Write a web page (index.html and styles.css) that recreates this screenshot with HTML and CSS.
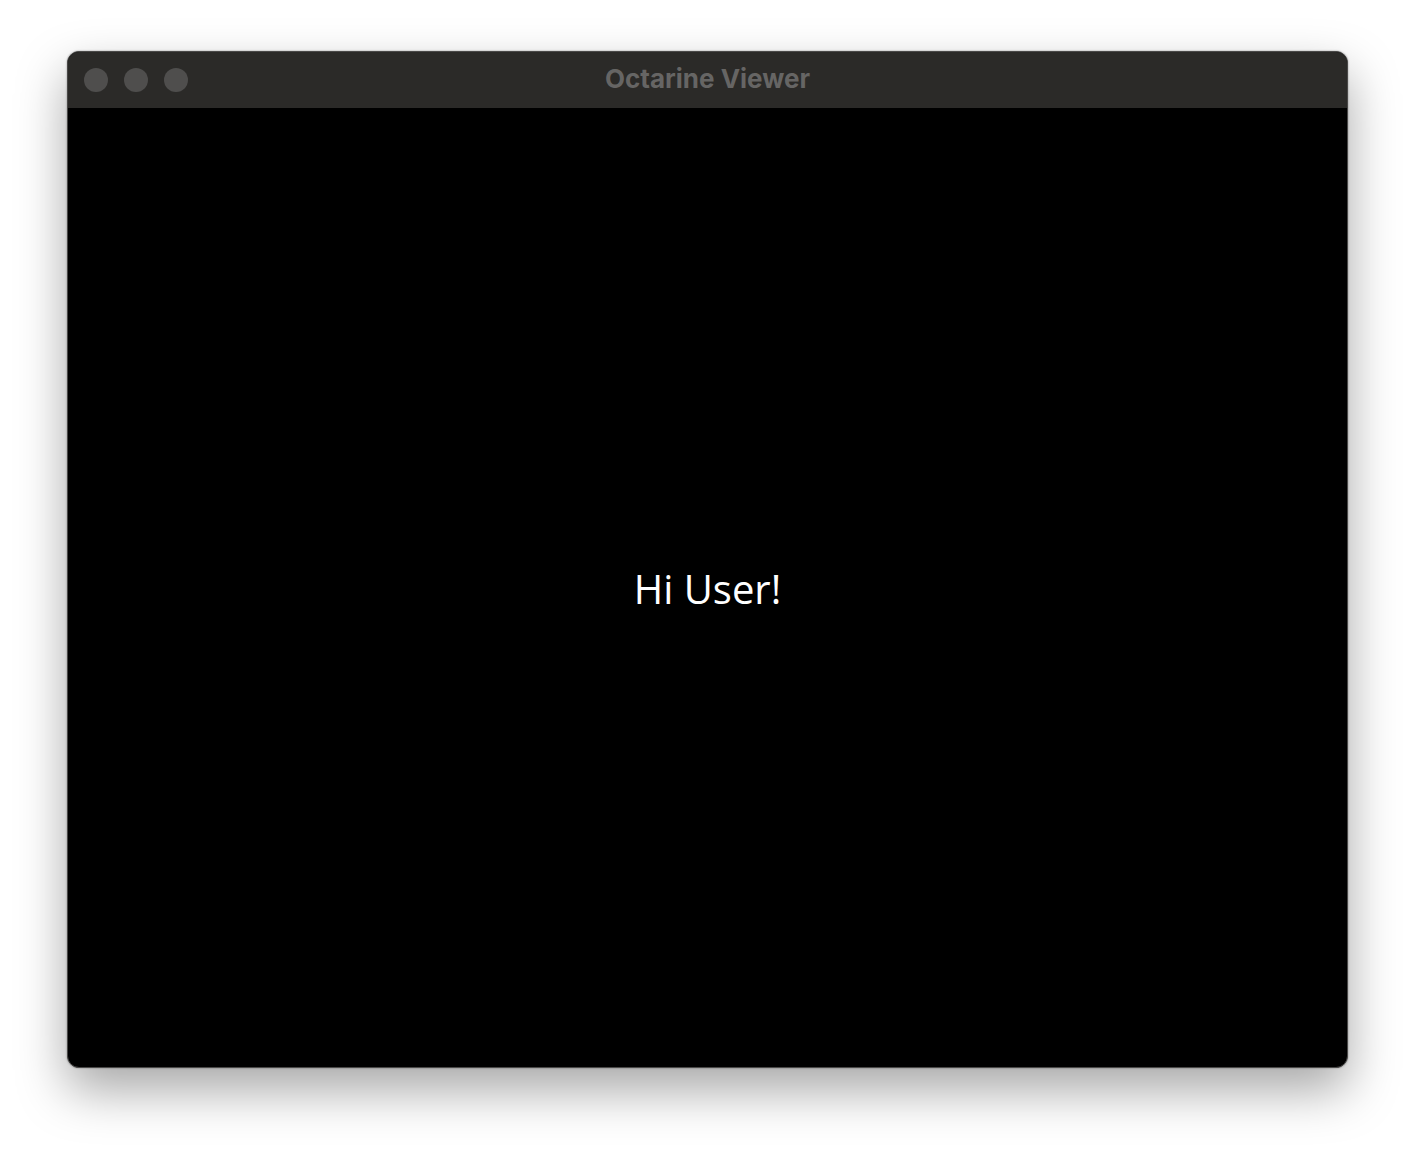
FILE: index.html
```html
<!DOCTYPE html>
<html>
<head>
<meta charset="utf-8">
<link rel="stylesheet" href="styles.css">
</head>
<body>
<div class="window">
  <div class="titlebar">
    <div class="lights">
      <span class="light"></span>
      <span class="light"></span>
      <span class="light"></span>
    </div>
    <div class="title">Octarine Viewer</div>
  </div>
  <div class="content">
    <div class="greeting">Hi User!</div>
  </div>
</div>
</body>
</html>
```
FILE: styles.css
```css
html, body {
  margin: 0;
  background: #ffffff;
}
body {
  padding: 51px 68px 0 67px;
  height: 1152px;
  box-sizing: border-box;
  overflow: hidden;
}
.window {
  width: 1281px;
  height: 1017px;
  box-sizing: border-box;
  border-radius: 12px;
  border: 1px solid #4a4948;
  background: #000;
  overflow: hidden;
  display: flex;
  flex-direction: column;
  box-shadow: 0 22px 50px rgba(0,0,0,0.35), 0 0 2px rgba(0,0,0,0.4);
}
.titlebar {
  height: 56px;
  flex: none;
  box-sizing: border-box;
  padding-bottom: 3px;
  background: #2b2a28;
  position: relative;
  display: flex;
  align-items: center;
  justify-content: center;
}
.lights {
  position: absolute;
  left: 16px;
  top: 16px;
  display: flex;
  gap: 16px;
}
.light {
  width: 24px;
  height: 24px;
  border-radius: 50%;
  background: #4f4e4d;
}
.title {
  font-family: Inter, "Liberation Sans", sans-serif;
  font-weight: 700;
  font-size: 26px;
  color: #666564;
}
.content {
  flex: 1;
  display: flex;
  align-items: center;
  justify-content: center;
  padding-top: 2px;
}
.greeting {
  font-family: "Open Sans", "Noto Sans", sans-serif;
  font-weight: 500;
  font-size: 40px;
  color: #ffffff;
}
```
